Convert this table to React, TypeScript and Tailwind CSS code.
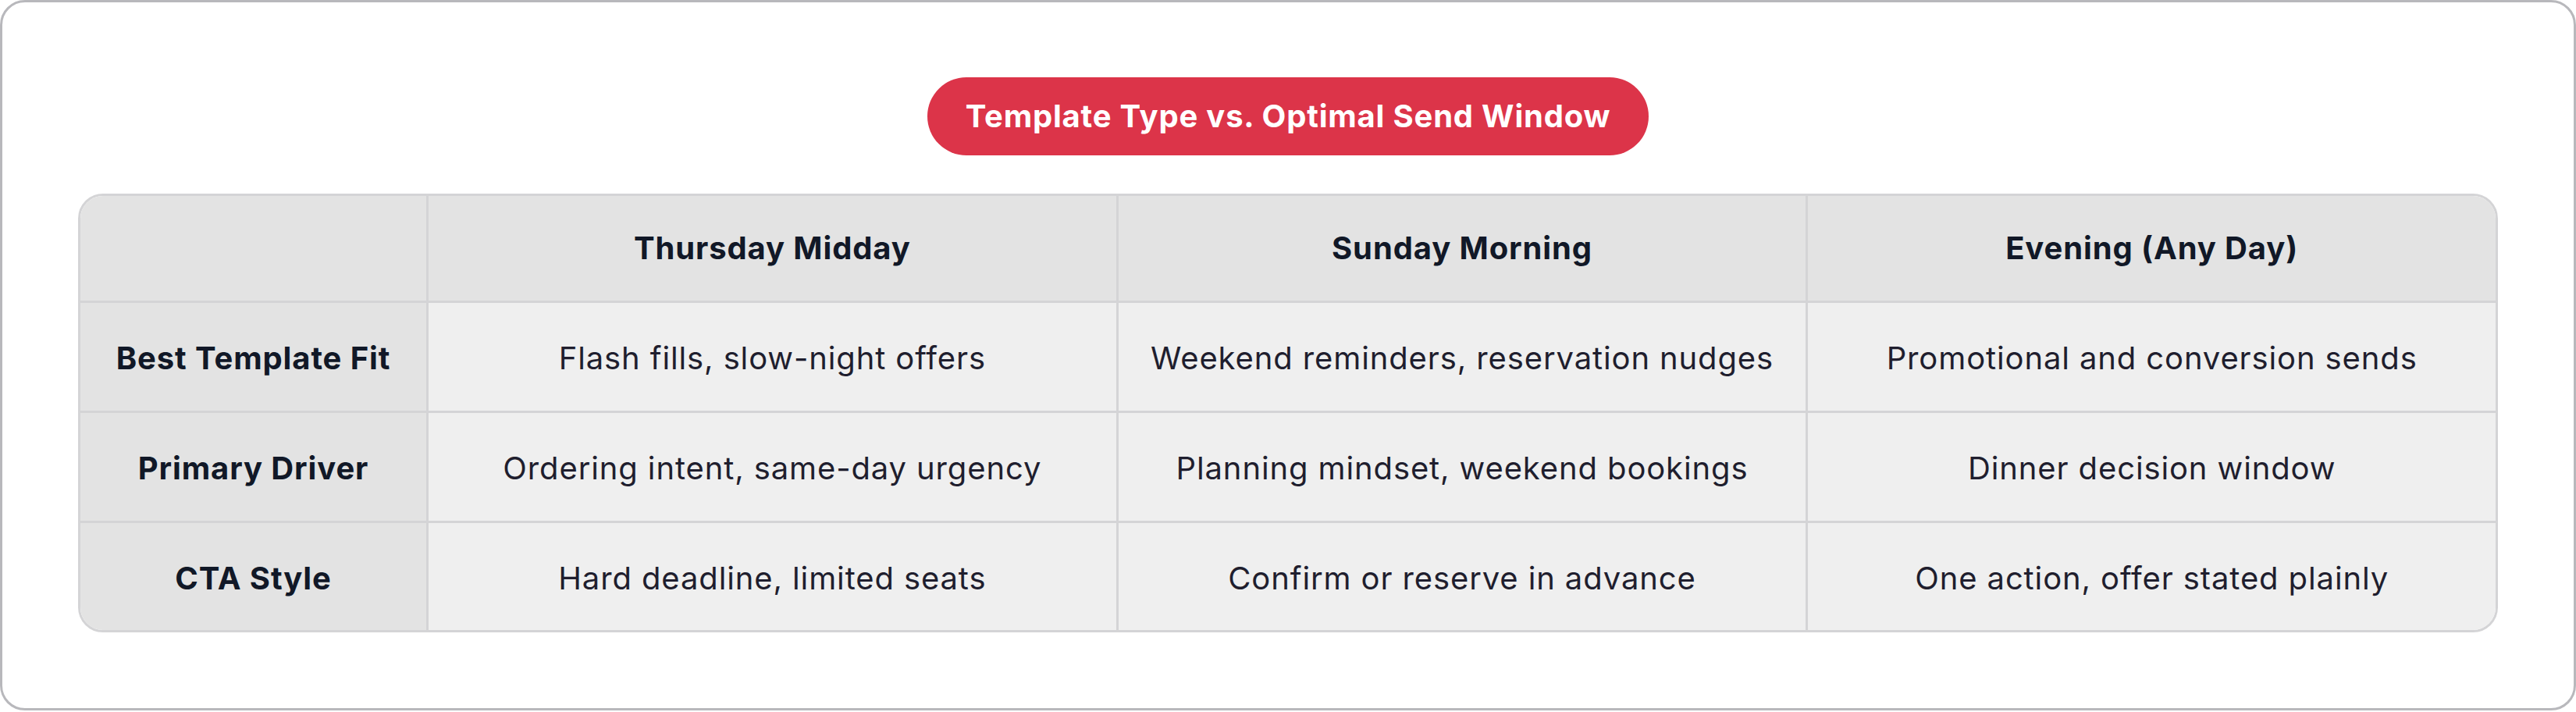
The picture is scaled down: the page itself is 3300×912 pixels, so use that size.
const columns = ['Thursday Midday', 'Sunday Morning', 'Evening (Any Day)'];

const rows = [
  {
    label: 'Best Template Fit',
    cells: ['Flash fills, slow-night offers', 'Weekend reminders, reservation nudges', 'Promotional and conversion sends'],
  },
  {
    label: 'Primary Driver',
    cells: ['Ordering intent, same-day urgency', 'Planning mindset, weekend bookings', 'Dinner decision window'],
  },
  {
    label: 'CTA Style',
    cells: ['Hard deadline, limited seats', 'Confirm or reserve in advance', 'One action, offer stated plainly'],
  },
];

export default function App() {
  return (
    <div className="w-[3300px] bg-white font-['Inter','Noto_Sans',sans-serif]">
      <div className="flex flex-col items-center rounded-[32px] border-[3px] border-[#b8b8bc] bg-white px-[97px] pt-[96px] pb-[97px]">
        {/* title pill */}
        <div className="mb-[49px] flex h-[100px] items-center rounded-full bg-[#dc3449] px-[49px] text-[40px] font-bold tracking-[0.02em] text-white">
          Template Type vs. Optimal Send Window
        </div>

        {/* comparison table */}
        <div className="w-full overflow-hidden rounded-[32px] border-[3px] border-[#d4d4d6] text-[40px] tracking-[0.022em]">
          <div className="grid h-[137px] grid-cols-[443px_1fr_1fr_1fr] border-b-[3px] border-[#d4d4d6] bg-[#e3e3e3]">
            <div />
            {columns.map((col) => (
              <div key={col} className="flex items-center justify-center border-l-[3px] border-[#d4d4d6] font-bold text-[#111827]">
                {col}
              </div>
            ))}
          </div>

          {rows.map((row, i) => (
            <div
              key={row.label}
              className={`grid grid-cols-[443px_1fr_1fr_1fr] ${i < rows.length - 1 ? 'h-[141px] border-b-[3px] border-[#d4d4d6]' : 'h-[137px]'}`}
            >
              <div className="flex items-center justify-center bg-[#e3e3e3] pt-[4px] font-bold text-[#111827]">{row.label}</div>
              {row.cells.map((cell) => (
                <div key={cell} className="flex items-center justify-center border-l-[3px] border-[#d4d4d6] bg-[#efefef] pt-[4px] text-[#1f1e2e]">
                  {cell}
                </div>
              ))}
            </div>
          ))}
        </div>
      </div>
    </div>
  );
}
